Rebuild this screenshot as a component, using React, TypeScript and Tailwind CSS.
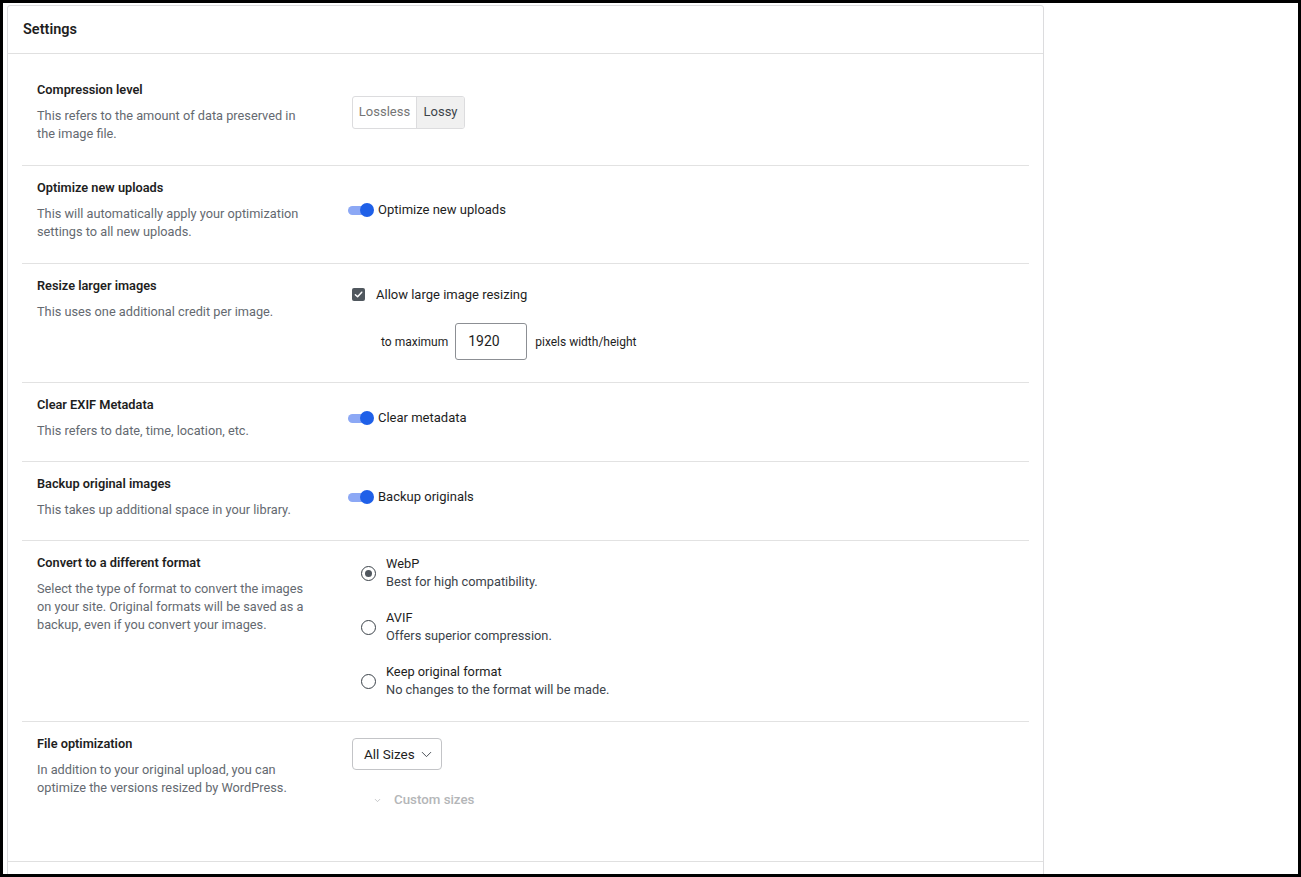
import { ChevronDown } from 'lucide-react'
import type { ReactNode } from 'react'

function Toggle({ label }: { label: string }) {
  return (
    <div className="flex items-center gap-[4px] -ml-[5px]">
      <div className="relative w-[27px] h-[14px]">
        <div className="absolute left-[1px] top-[2.5px] w-[22px] h-[9px] rounded-full bg-[#8ca8f5]" />
        <div className="absolute right-0 top-0 w-[14px] h-[14px] rounded-full bg-[#1f60e8]" />
      </div>
      <span className="text-[13px] text-[#1e1e1e]">{label}</span>
    </div>
  )
}

function Radio({ checked, label, desc }: { checked?: boolean; label: string; desc: string }) {
  return (
    <div className="flex items-center gap-[10px] ml-[9px]">
      <div className="w-[15px] h-[15px] rounded-full border-[1.5px] border-[#3c434a] flex items-center justify-center">
        {checked && <div className="w-[7px] h-[7px] rounded-full bg-[#50575e]" />}
      </div>
      <div className="text-[12.8px] leading-[18px]">
        <p className="text-[#1e1e1e]">{label}</p>
        <p className="text-[#3c434a]">{desc}</p>
      </div>
    </div>
  )
}

function Row({ title, desc, children, first, tight, align = 'center' }: {
  title: string
  desc: ReactNode
  children: ReactNode
  first?: boolean
  tight?: boolean
  align?: 'center' | 'start'
}) {
  return (
    <div className={`grid grid-cols-[330px_1fr] pt-[13px] ${tight ? 'pb-[21px]' : 'pb-[22px]'} ${first ? '' : 'border-t border-[#e2e2e2]'}`}>
      <div className="pl-[15px]">
        <h3 className="text-[12.75px] leading-[18px] font-semibold text-[#1e1e1e]">{title}</h3>
        <p className="mt-[8px] max-w-[274px] text-[12.75px] leading-[18px] text-[#646970]">{desc}</p>
      </div>
      <div className={align === 'center' ? 'self-center' : 'self-start'}>{children}</div>
    </div>
  )
}

export default function App() {
  return (
    <div className="w-[1301px] h-[877px] border-[3px] border-black bg-white overflow-hidden font-['Roboto',sans-serif]">
      <div className="pl-[4px] pt-[2px]">
        <div className="w-[1037px] border border-[#dcdcde] rounded-t-[3px]">
          <div className="h-[48px] px-[15px] flex items-center border-b border-[#e0e0e0]">
            <h2 className="text-[14.5px] font-semibold text-[#1e1e1e]">Settings</h2>
          </div>

          <div className="px-[14px] pt-[14px] pb-[30px]">
            <Row first title="Compression level" desc="This refers to the amount of data preserved in the image file.">
              <div className="inline-flex h-[33px] border border-[#dcdcde] rounded-[3px] overflow-hidden text-[13px]">
                <div className="w-[63px] flex items-center justify-center text-[#757575]">Lossless</div>
                <div className="w-[48px] flex items-center justify-center bg-[#f0f0f0] border-l border-[#dcdcde] text-[#3c434a]">Lossy</div>
              </div>
            </Row>

            <Row title="Optimize new uploads" desc="This will automatically apply your optimization settings to all new uploads.">
              <Toggle label="Optimize new uploads" />
            </Row>

            <Row title="Resize larger images" desc="This uses one additional credit per image." align="start">
              <div className="h-[35px] flex items-center gap-[11px]">
                <div className="w-[13px] h-[13px] rounded-[2px] bg-[#50575e] flex items-center justify-center">
                  <svg width="9" height="9" viewBox="0 0 10 10" fill="none">
                    <path d="M1.5 5.2 L4 7.6 L8.6 2.4" stroke="white" strokeWidth="1.6" strokeLinecap="round" strokeLinejoin="round" />
                  </svg>
                </div>
                <span className="text-[13px] text-[#1e1e1e]">Allow large image resizing</span>
              </div>
              <div className="mt-[11px] pl-[29px] flex items-center text-[12px] text-[#1e1e1e]">
                <span>to maximum</span>
                <div className="ml-[7px] w-[72px] h-[37px] border border-[#8c8f94] rounded-[3px] px-[12px] flex items-center text-[14px]">1920</div>
                <span className="ml-[8px]">pixels width/height</span>
              </div>
            </Row>

            <Row tight title="Clear EXIF Metadata" desc="This refers to date, time, location, etc.">
              <Toggle label="Clear metadata" />
            </Row>

            <Row tight title="Backup original images" desc="This takes up additional space in your library.">
              <Toggle label="Backup originals" />
            </Row>

            <Row
              title="Convert to a different format"
              desc="Select the type of format to convert the images on your site. Original formats will be saved as a backup, even if you convert your images."
              align="start"
            >
              <div className="pt-[1px] flex flex-col gap-[18px]">
                <Radio checked label="WebP" desc="Best for high compatibility." />
                <Radio label="AVIF" desc="Offers superior compression." />
                <Radio label="Keep original format" desc="No changes to the format will be made." />
              </div>
            </Row>

            <Row title="File optimization" desc="In addition to your original upload, you can optimize the versions resized by WordPress." align="start">
              <div className="pt-[3px]">
                <div className="inline-flex items-center h-[32px] w-[90px] pl-[11px] border border-[#c3c4c7] rounded-[4px] text-[13.5px] text-[#1e1e1e]">
                  <span>All Sizes</span>
                  <ChevronDown className="ml-[3px] w-[17px] h-[17px] text-[#3c434a]" strokeWidth={1.3} />
                </div>
                <div className="mt-[21px] ml-[21px] flex items-center gap-[12px] text-[13.3px] leading-[18px] font-medium text-[#b4b6b8]">
                  <ChevronDown className="w-[9px] h-[9px]" strokeWidth={2} />
                  <span>Custom sizes</span>
                </div>
              </div>
            </Row>
          </div>

          <div className="h-[60px] border-t border-[#e0e0e0]" />
        </div>
      </div>
    </div>
  )
}
